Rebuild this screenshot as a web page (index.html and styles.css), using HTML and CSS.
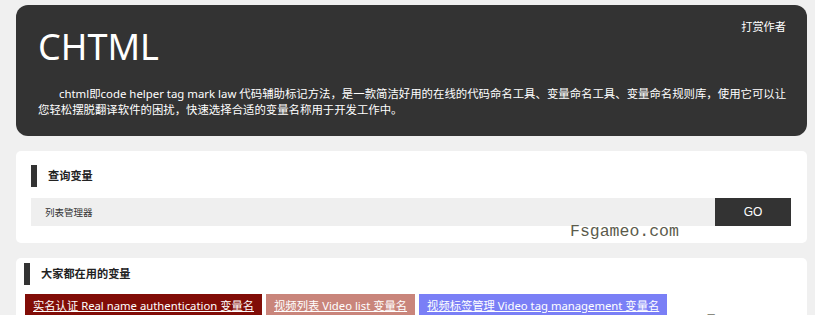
FILE: index.html
```html
<!DOCTYPE html>
<html lang="zh-CN">
<head>
    <meta charset="UTF-8">
    <meta name="viewport" content="width=device-width, initial-scale=1.0">
    <title>CHTML - 代码命名工具</title>
    <link rel="stylesheet" href="styles.css">
</head>
<body>
    <div class="page">
        <header class="banner">
            <a class="reward" href="#">打赏作者</a>
            <h1>CHTML</h1>
            <p>chtml即code helper tag mark law 代码辅助标记方法，是一款简洁好用的在线的代码命名工具、变量命名工具、变量命名规则库，使用它可以让您轻松摆脱翻译软件的困扰，快速选择合适的变量名称用于开发工作中。</p>
        </header>

        <section class="card search-card">
            <h2 class="card-title">查询变量</h2>
            <form class="search-form">
                <input type="text" value="列表管理器">
                <button type="submit">GO</button>
            </form>
        </section>

        <section class="card popular-card">
            <h2 class="card-title">大家都在用的变量</h2>
            <div class="tags">
                <a class="tag tag-red" href="#">实名认证 Real name authentication 变量名</a>
                <a class="tag tag-rose" href="#">视频列表 Video list 变量名</a>
                <a class="tag tag-blue" href="#">视频标签管理 Video tag management 变量名</a>
            </div>
        </section>

        <div class="watermark">Fsgameo.com</div>
        <div class="watermark watermark-low">Fsgameo.com</div>
    </div>
</body>
</html>
```

FILE: styles.css
```css
body {
    font-family: "Noto Sans", "Noto Sans CJK SC", sans-serif;
    background-color: #f0f0f0;
    margin: 0;
    padding: 0;
    height: 315px;
    overflow: hidden;
}

.page {
    position: relative;
    padding: 5px 8px 0 16px;
    display: flex;
    flex-direction: column;
    gap: 15px;
}

.banner {
    position: relative;
    background: #333;
    color: #fff;
    border-radius: 12px;
    padding: 20px 19px 18px 22px;
}

.reward {
    position: absolute;
    top: 13px;
    right: 21px;
    color: #fff;
    font-size: 11.2px;
    text-decoration: none;
}

.banner h1 {
    margin: 0;
    font-size: 36px;
    line-height: 44px;
    font-weight: normal;
}

.banner p {
    margin: 17px 0 0;
    font-size: 11.4px;
    line-height: 16px;
    text-indent: 21px;
}

.card {
    background: #fff;
    border-radius: 5px;
}

.card-title {
    margin: 0;
    border-left: 6px solid #333;
    padding-left: 11px;
    font-size: 11.2px;
    line-height: 22px;
    font-weight: bold;
    color: #222;
}

.search-card {
    padding: 14px 16px 17px 15px;
}

.search-form {
    display: flex;
    margin-top: 11px;
}

.search-form input {
    flex: 1;
    height: 28px;
    border: none;
    background: #efefef;
    padding: 0 14px;
    font-size: 9.5px;
    font-family: inherit;
    color: #333;
    box-sizing: border-box;
}

.search-form input:focus {
    outline: none;
}

.search-form button {
    width: 76px;
    height: 28px;
    border: none;
    background: #333;
    color: #fff;
    font-size: 12px;
    font-family: "Liberation Sans", sans-serif;
    cursor: pointer;
}

.popular-card {
    padding: 5px 8px 20px 8px;
}

.tags {
    display: flex;
    flex-wrap: wrap;
    gap: 4px;
    margin-top: 9px;
    padding-left: 1px;
}

.tag {
    display: block;
    padding: 0 8px;
    line-height: 24px;
    font-size: 11.3px;
    color: #fff;
    text-decoration: underline;
}

.tag-red {
    background: #810d07;
}

.tag-rose {
    background: #c9857b;
}

.tag-blue {
    background: #7a7ff6;
}

.watermark {
    position: absolute;
    left: 570px;
    top: 222px;
    font-family: "Liberation Mono", monospace;
    font-size: 16.5px;
    color: #5b5b4c;
}

.watermark-low {
    left: 706px;
    top: 311px;
    color: #8a8a80;
}
```
